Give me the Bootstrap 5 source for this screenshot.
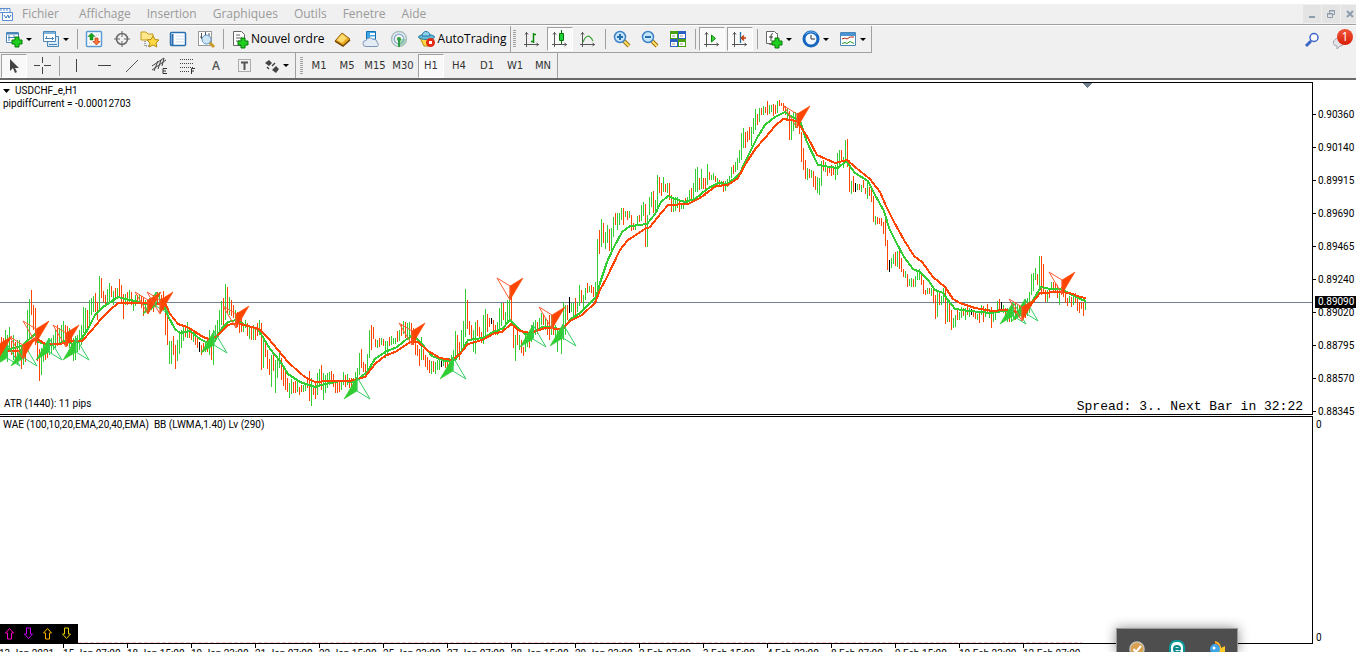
<!DOCTYPE html>
<html lang="fr">
<head>
<meta charset="utf-8">
<meta name="viewport" content="width=device-width, initial-scale=1">
<title>USDCHF_e,H1</title>
<link href="https://cdn.jsdelivr.net/npm/bootstrap@5.3.0/dist/css/bootstrap.min.css" rel="stylesheet">
<style>
body{font-family:"Open Sans","Noto Sans",sans-serif;font-size:12px;line-height:16px;color:#000;background:#fff}
button{font:inherit;color:inherit;background:none;border:0;padding:0}
svg{display:block;flex:none}
.menubar{height:21px;margin-top:4px;background:#f0f0f0;border-bottom:1px solid #a0a0a0}
.menubar nav{gap:16px}
.menubar a{color:#9a9a9a;text-decoration:none}
.winbtns{gap:1px;margin-right:-3px}
.winbtn{width:18px;height:18px;background:#e4e4e4;display:flex;align-items:center;justify-content:center}
.tools{background:#f0f0f0;border-bottom:2px solid #696969;border-top:1px solid #fff}
.bar1{height:27px}
.bar2{height:25px}
.strip{border-right:1px solid #a0a0a0}
.bar1 .strip{border-bottom:1px solid #a0a0a0}
.tb{width:28px;height:24px;display:flex;align-items:center;justify-content:center;border:1px solid transparent}
.tb.on{width:26px;margin:0 1px;background:#f9f9f9;border-color:#a0a0a0 #fff #fff #a0a0a0}
.tb.drop{width:37px;gap:3px}
.tb.wide{width:auto;gap:2px;padding:0 3px 0 4px}
.tb.drop::after{content:"";border:3px solid transparent;border-top-color:#000;border-bottom:0}
.tf{font-family:"DejaVu Sans",sans-serif;font-size:10px;color:#333}
.sep{width:1px;height:20px;background:#a0a0a0;margin:0 2px 0 3px}
.grip{width:3px;height:18px;margin:0 2px;background:repeating-linear-gradient(#a0a0a0 0 1px,#f0f0f0 1px 2px)}
.lettera{color:#555;font-weight:600}
.work{font-family:Roboto,"Noto Sans",sans-serif;font-size:10px;line-height:13px;padding-top:2px;min-height:0}
.plot{border:solid #000;border-width:1px 1px 1px 0;min-width:0}
.plot .over{position:absolute}
.plot .ttl{left:3px;top:1px}
.plot .atr{left:4px;bottom:4px}
.plot .spr{right:9px;bottom:0;font:13px/14px "Liberation Mono",monospace;white-space:pre}
.scale{width:43px;position:relative}
.ylist{padding-top:26px;height:336px;margin-bottom:-3px}
.ylist li{padding-left:5px;position:relative}
.ylist li::before{content:"";position:absolute;left:0;top:6px;width:3px;height:1px;background:#000}
.now{position:absolute;left:2px;top:214px;width:41px;height:12px;line-height:12px;background:#000;color:#fff;padding-left:3px}
.pane2{margin-top:1px;min-height:0}
.zeros{padding:2px 0 0 3px}
.sig{position:absolute;left:0;bottom:0;background:#000;padding-right:2px}
.sig button{width:19px;height:19px;display:flex;align-items:center;justify-content:center}
.dash{position:absolute;left:78px;bottom:0;width:1004px;height:1px;background:repeating-linear-gradient(90deg,#ffc4c4 0 4px,#fff 4px 6px)}
.dates{height:8px;margin-left:-1px;overflow:hidden}
.dates li{width:64px;flex:none;white-space:nowrap;line-height:14px;padding-top:3px;position:relative}
.dates li::before{content:"";position:absolute;left:0;top:0;width:1px;height:4px;background:#000}
.tray{position:absolute;right:118px;bottom:0;width:122px;height:24px;background:#4e4e4e;border:1px solid #999;border-bottom:0;box-shadow:0 0 12px rgba(0,0,0,.45);overflow:hidden;padding-top:11px}
.alerts{position:relative;width:26px;height:24px}
.alerts svg{margin:8px 0 0 2px}
.alerts .num{position:absolute;right:3px;top:1px;width:16px;height:16px;border-radius:8px;background:linear-gradient(#f0553a,#d81e05);color:#fff;text-align:center;font-size:12px}
</style>
</head>
<body class="vh-100 d-flex flex-column overflow-hidden position-relative">
<svg width="0" height="0" class="position-absolute"><defs>
<g id="plus"><path d="M3 0h4v3h3v4H7v3H3V7H0V3h3z" fill="#1fcf1f" stroke="#067a06"/></g>
<g id="axes" fill="none" stroke="#555"><path d="M3.500 2v15M1 14.500h15M2 4.500l1.500-2 1.500 2M13.500 13l2 1.500-2 1.500"/></g>
<g id="lens"><path d="M11 11l5 5" stroke="#9a7210" stroke-width="4"/><path d="M11 11l5 5" stroke="#ffe066" stroke-width="2"/><circle cx="7" cy="7" r="5.500" fill="#c5e6fa" stroke="#3f83c6" stroke-width="1.500"/></g>
<g id="up"><path d="M0 -22V-8L-13 0z" fill="#32cd32" stroke="#32cd32" stroke-width=".6"/><path d="M0 -22L13 0L0 -8z" fill="none" stroke="#32cd60"/></g>
<g id="down"><path d="M0 22V8L13 0z" fill="#ff4500" stroke="#ff4500" stroke-width=".6"/><path d="M0 22L-13 0L0 8z" fill="none" stroke="#ff5a30"/></g>
</defs></svg>

<header class="menubar d-flex align-items-center flex-shrink-0">
 <svg width="14" height="16" viewBox="0 0 14 16"><path d="M0 2.500h10v4H0M2.500 6.500h10v8h-10z" fill="#fff" stroke="#5b8dd0"/><path d="M4 9l2 3 2-3 1 3 2-3" fill="none" stroke="#3474c4"/><path d="M0 4h9" stroke="#5b8dd0" stroke-dasharray="2 1"/></svg>
 <nav class="d-flex ms-2"><a href="#">Fichier</a><a href="#" class="ms-1">Affichage</a><a href="#">Insertion</a><a href="#">Graphiques</a><a href="#">Outils</a><a href="#">Fenetre</a><a href="#">Aide</a></nav>
 <div class="winbtns d-flex ms-auto">
  <button class="winbtn" aria-label="Réduire"><svg width="10" height="10"><path d="M2 8h6" stroke="#8d9dad" stroke-width="2"/></svg></button>
  <button class="winbtn" aria-label="Restaurer"><svg width="10" height="10" fill="none" stroke="#8d9dad"><path d="M3.500 4V1.500h5v4H7M1.500 4.500h5v4h-5zM3 2h6M1 5h6"/></svg></button>
  <button class="winbtn" aria-label="Fermer"><svg width="10" height="10"><path d="M2 2l6 6M8 2l-6 6" stroke="#8d9dad" stroke-width="2"/></svg></button>
 </div>
</header>

<section class="tools flex-shrink-0">
 <div class="bar1 d-flex">
  <div class="strip d-flex align-items-center">
   <button class="tb drop" aria-label="Nouveau graphique"><svg width="18" height="18"><path d="M1.500 2.500h12v10h-12z" fill="#fff" stroke="#4a86b8"/><path d="M2 3.500h11" stroke="#4a86b8" stroke-width="2"/><path d="M4 5v6M3 7.500h7M9 5v3" stroke="#4a86b8"/><use href="#plus" x="7" y="7"/></svg></button>
   <button class="tb drop" aria-label="Profils"><svg width="18" height="18"><path d="M5.500 6.500h11v10h-11z" fill="#dceaf5" stroke="#4a86b8"/><path d="M1.500 1.500h12v10h-12z" fill="#fff" stroke="#4a86b8"/><path d="M2 3h11" stroke="#7db3dc" stroke-width="2"/><path d="M3 8.500h9M4.500 6v3M10.500 7v3M7 14.500h8" stroke="#4a86b8"/></svg></button>
   <i class="sep"></i>
   <button class="tb" aria-label="Observation du marché"><svg width="18" height="18"><rect x="1.500" y="1.500" width="15" height="15" rx="1" fill="#fff" stroke="#5a9bd5" stroke-width="1.500"/><path d="M6.500 3l3.500 3.500H8V10H5V6.500H3z" fill="#1ba51b" stroke="#087508" stroke-width=".5"/><path d="M11.500 15l-3.500-3.500h2V8h3v3.500h2z" fill="#ff7840" stroke="#c83a08" stroke-width=".8"/><path d="M11 5h4M4 13h3" stroke="#bbb" stroke-dasharray="1 1"/></svg></button>
   <button class="tb" aria-label="Fenêtre de données"><svg width="18" height="18" fill="none" stroke="#666"><circle cx="9" cy="9" r="5.500" stroke-width="1.500"/><path d="M9 1v6M9 11v6M1 9h6M11 9h6"/></svg></button>
   <button class="tb" aria-label="Navigateur"><svg width="20" height="18"><path d="M1 2h5l2 2h5v6H1z" fill="#ffe88a" stroke="#c09a20"/><path d="M5 11v5h4" fill="none" stroke="#555" stroke-dasharray="1 1"/><path d="M13 6l2 3.500 4 .5-3 3 .8 4L13 15l-3.800 2 .8-4-3-3 4-.5z" fill="#ffd942" stroke="#b98a10"/></svg></button>
   <button class="tb" aria-label="Terminal"><svg width="18" height="18"><rect x="1.500" y="2.500" width="15" height="13" rx="1" fill="#fff" stroke="#2a6fb0" stroke-width="1.500"/><path d="M3.500 4v11" stroke="#2a6fb0" stroke-width="2"/><path d="M7 6h8M7 9h8M7 12h8" stroke="#cdddee"/></svg></button>
   <button class="tb" aria-label="Testeur de stratégie"><svg width="20" height="19"><rect x="2.500" y="1.500" width="13" height="14" fill="#fff" stroke="#999"/><path d="M5.500 3v6M9.500 2v4M13 3v5M4 7h2" stroke="#555"/><path d="M13 12l5 5" stroke="#c89a28" stroke-width="3"/><circle cx="10.500" cy="9.500" r="4.500" fill="#c5e0f5" fill-opacity=".85" stroke="#5b95c8"/></svg></button>
   <i class="sep"></i>
   <button class="tb wide"><svg width="18" height="19"><path d="M2.500 1.500h8l3 3v11h-11z" fill="#fff" stroke="#666"/><path d="M5 5h4M5 8h6M5 11h4" stroke="#666"/><use href="#plus" x="7" y="8"/></svg><span>Nouvel ordre</span></button>
   <button class="tb" aria-label="MetaEditor"><svg width="18" height="18"><path d="M1 11l7-8 8 6-7 7z" fill="#e8a820" stroke="#946010"/><path d="M3 10l5-6 5 4-5 5z" fill="#ffdc70"/><path d="M1 11l8 5 7-6" fill="none" stroke="#7a4c08" stroke-width="1.500"/></svg></button>
   <button class="tb" aria-label="Hébergement"><svg width="18" height="18"><path d="M4.500 1.500h9v9h-9z" fill="#3fa5e8" stroke="#1670b0"/><path d="M8 3h5v2H8zM8 6.500h5v2H8z" fill="#fff"/><path d="M4 16.500a3 3 0 0 1 0-6 4 4 0 0 1 7-1 3 3 0 0 1 4 3 2.200 2.200 0 0 1 0 4z" fill="#e3ebf5" stroke="#7e97b8"/></svg></button>
   <button class="tb" aria-label="Signaux"><svg width="18" height="18" fill="none"><path d="M9 9v8a8 8 0 0 0 7-8z" fill="#9fdc9f"/><circle cx="9" cy="9" r="7.500" stroke="#a9bfc3" stroke-width="1.500"/><circle cx="9" cy="9" r="4.800" stroke="#7fa9cf" stroke-width="1.300"/><circle cx="9" cy="9" r="2" fill="#2f9d45"/><path d="M9 10v7" stroke="#2f9d45" stroke-width="2"/></svg></button>
   <button class="tb wide"><svg width="18" height="18"><path d="M2 8h13l-4 8H6z" fill="#ffd84a" stroke="#bb8a10"/><ellipse cx="8.500" cy="7" rx="8" ry="2.500" fill="#65b7dc" stroke="#28799f"/><path d="M4 6c0-6 8-6 8 0z" fill="#8dd2ef" stroke="#28799f"/><circle cx="12.500" cy="12.500" r="4.500" fill="#e32a12"/><path d="M11 11h3v3h-3z" fill="#fff"/></svg><span>AutoTrading</span></button>
  </div>
  <div class="strip d-flex align-items-center">
   <i class="grip"></i>
   <button class="tb" aria-label="Graphique en barres"><svg width="18" height="18"><use href="#axes"/><path d="M10.500 3v10M8 11.500h2M10.500 4.500H13" stroke="#078a07" stroke-width="1.500" fill="none"/></svg></button>
   <button class="tb on" aria-label="Chandeliers"><svg width="18" height="18"><use href="#axes"/><path d="M10.500 0v14" stroke="#077807"/><path d="M8.500 3.500h4v7h-4z" fill="#1fd03a" stroke="#077807"/></svg></button>
   <button class="tb" aria-label="Courbe"><svg width="18" height="18"><use href="#axes"/><path d="M4 12c3-7 6-8 10-1" fill="none" stroke="#3aa33a" stroke-width="1.200"/></svg></button>
   <i class="sep"></i>
   <button class="tb" aria-label="Zoom avant"><svg width="18" height="18"><use href="#lens"/><path d="M4 7h6M7 4v6" stroke="#2470ad" stroke-width="2"/></svg></button>
   <button class="tb" aria-label="Zoom arrière"><svg width="18" height="18"><use href="#lens"/><path d="M4 7h6" stroke="#2470ad" stroke-width="2"/></svg></button>
   <button class="tb" aria-label="Mosaïque"><svg width="18" height="18"><path d="M1 1h8v8H1zM9 9h8v8H9z" fill="#49a010"/><path d="M9 1h8v8H9zM1 9h8v8H1z" fill="#2a5fc4"/><path d="M2 4h6v4H2zM10 4h6v4h-6zM2 12h6v4H2zM10 12h6v4h-6z" fill="#fff"/><path d="M3 6h3M11 6h3M3 14h3M11 14h3" stroke="#999"/></svg></button>
   <i class="sep"></i>
   <button class="tb on" aria-label="Défilement automatique"><svg width="18" height="18"><use href="#axes"/><path d="M8.500 5l4 3.500-4 3.500z" fill="#3fd03f" stroke="#078a07"/></svg></button>
   <button class="tb on" aria-label="Décalage du graphique"><svg width="18" height="18"><use href="#axes"/><path d="M9.500 2v11" stroke="#2070a0" stroke-width="1.300"/><path d="M10 8h5M13 5.500L10.500 8l2.500 2.500" fill="none" stroke="#c13a0a" stroke-width="1.500"/></svg></button>
   <i class="sep"></i>
   <button class="tb drop" aria-label="Indicateurs"><svg width="18" height="19"><path d="M4.500 3.500h8v11h-8z" fill="#fff" stroke="#777"/><path d="M1.500 1.500h8l3 3v9h-11z" fill="#fff" stroke="#666"/><path d="M8 4c-2-1-2 1-2 7M4 7h4" fill="none" stroke="#333"/><use href="#plus" x="7" y="8"/></svg></button>
   <button class="tb drop" aria-label="Périodes"><svg width="18" height="18"><circle cx="9" cy="9" r="7" fill="#f2f8ff" stroke="#1766bd" stroke-width="3"/><path d="M3.500 4a8 8 0 0 1 11 0" fill="none" stroke="#71b6f2"/><path d="M9 5v4h4" fill="none" stroke="#333"/></svg></button>
   <button class="tb drop" aria-label="Modèles"><svg width="18" height="18"><path d="M1.500 2.500h15v13h-15z" fill="#fff" stroke="#4a86b8"/><path d="M2 4.500h14" stroke="#4b94d6" stroke-width="3"/><path d="M3 9l3-1 2 1 3-2h4" fill="none" stroke="#b32a10"/><path d="M3 13.500l3-1 2 1 3-2 4 2" fill="none" stroke="#229a22"/></svg></button>
  </div>
  <div class="ms-auto d-flex align-items-center">
   <button class="tb me-1" aria-label="Rechercher"><svg width="16" height="16" fill="none"><path d="M2 14l5-5" stroke="#3a66c8" stroke-width="3"/><circle cx="10" cy="5.500" r="4" fill="#fff" stroke="#3a66c8" stroke-width="1.500"/></svg></button>
   <button class="alerts" aria-label="Messages"><svg width="14" height="14"><path d="M6 1c7-2 10 7 2 8l-3 3V9C-1 8 1 2 6 1z" fill="#e3e3ea" stroke="#a5a5ad"/></svg><span class="num">1</span></button>
  </div>
 </div>
 <div class="bar2 d-flex">
  <div class="strip d-flex align-items-center">
   <button class="tb on" aria-label="Curseur"><svg width="14" height="16"><path d="M3 1v12l3-3 2 5 2-1-2-4h4z" fill="#444"/></svg></button>
   <button class="tb" aria-label="Réticule"><svg width="17" height="17"><path d="M8.500 0v6M8.500 10v7M0 8.500h6M10 8.500h7" stroke="#444"/></svg></button>
   <i class="sep"></i>
   <button class="tb" aria-label="Ligne verticale"><svg width="15" height="15"><path d="M7.500 1v13" stroke="#444"/></svg></button>
   <button class="tb" aria-label="Ligne horizontale"><svg width="15" height="15"><path d="M1 7.500h13" stroke="#444"/></svg></button>
   <button class="tb" aria-label="Ligne de tendance"><svg width="15" height="15"><path d="M1 14L13 2" stroke="#555"/></svg></button>
   <button class="tb" aria-label="Canal équidistant"><svg width="18" height="18"><path d="M1 13L15 3M1 9l12-8M3 14L7 4M7 12l3-9M11 9l2-8" stroke="#444"/><path d="M16 11.500h-4v5h4M12 14h3" fill="none" stroke="#333"/></svg></button>
   <button class="tb" aria-label="Fibonacci"><svg width="18" height="18"><path d="M1 2.500h14M1 6.500h14M1 10.500h14M1 14.500h9" stroke="#444" stroke-dasharray="1 1"/><path d="M16 11.500h-3.500V17M12 14h3" fill="none" stroke="#333"/></svg></button>
   <button class="tb lettera">A</button>
   <button class="tb" aria-label="Étiquette"><svg width="15" height="15"><path d="M1.500 1.500h12v12h-12z" fill="none" stroke="#666" stroke-dasharray="1 1"/><path d="M4 4.500h7M7.500 4v8" stroke="#555" stroke-width="2"/></svg></button>
   <button class="tb drop" aria-label="Flèches"><svg width="16" height="16"><path d="M5 2l3 3-3 3-4-3zM12 8l3 3-3 4-4-3z" fill="#444"/><path d="M3 9l2 2M8 8l3-3" stroke="#444" stroke-width="1.500"/></svg></button>
  </div>
  <div class="strip d-flex align-items-center tf">
   <i class="grip ms-1"></i>
   <button class="tb">M1</button><button class="tb">M5</button><button class="tb">M15</button><button class="tb">M30</button><button class="tb on">H1</button><button class="tb">H4</button><button class="tb">D1</button><button class="tb">W1</button><button class="tb">MN</button>
  </div>
 </div>
</section>

<main class="work flex-grow-1 d-flex flex-column">
 <div class="d-flex flex-shrink-0">
  <div class="plot flex-grow-1 position-relative">
   <svg id="chart" width="100%" height="331" shape-rendering="crispEdges"><line x1="0" x2="100%" y1="219.500" y2="219.500" stroke="#708090"/><g id="price" transform="translate(0,-83)"><path d="M1083 83h9l-4.500 5z" fill="#708090"/></g></svg>
   <div class="over ttl"><div><svg class="d-inline-block" width="7" height="8"><path d="M0 2h7L3.500 6z"/></svg>&nbsp; USDCHF_e,H1</div><div>pipdiffCurrent = -0.00012703</div></div>
   <div class="over atr">ATR (1440): 11 pips</div>
   <div class="over spr">Spread: 3.. Next Bar in 32:22</div>
  </div>
  <div class="scale"><ul class="ylist list-unstyled d-flex flex-column justify-content-between"><li>0.90360</li><li>0.90140</li><li>0.89915</li><li>0.89690</li><li>0.89465</li><li>0.89240</li><li>0.89020</li><li>0.88795</li><li>0.88570</li><li>0.88345</li></ul><div class="now">0.89090</div></div>
 </div>
 <div class="pane2 d-flex flex-grow-1">
  <div class="plot flex-grow-1 position-relative">
   <div class="over ttl">WAE (100,10,20,EMA,20,40,EMA)&nbsp; BB (LWMA,1.40) Lv (290)</div>
   <div class="dash"></div>
   <div class="sig d-flex">
    <button aria-label="Achat A"><svg width="11" height="13"><path d="M5.500 1.500l4 4.500h-2v6h-4V6h-2z" fill="none" stroke="#ff00c8"/></svg></button>
    <button aria-label="Vente A"><svg width="11" height="13"><path d="M5.500 11.500l4-4.500h-2V1h-4v6h-2z" fill="none" stroke="#c800ff"/></svg></button>
    <button aria-label="Achat B"><svg width="11" height="13"><path d="M5.500 1.500l4 4.500h-2v6h-4V6h-2z" fill="none" stroke="#ffb000"/></svg></button>
    <button aria-label="Vente B"><svg width="11" height="13"><path d="M5.500 11.500l4-4.500h-2V1h-4v6h-2z" fill="none" stroke="#e8d000"/></svg></button>
   </div>
  </div>
  <ul class="scale zeros list-unstyled mb-0 d-flex flex-column justify-content-between"><li>0</li><li>0</li></ul>
 </div>
 <ul class="dates list-unstyled d-flex mb-0 flex-shrink-0"><li>13 Jan 2021</li><li>15 Jan 07:00</li><li>18 Jan 15:00</li><li>19 Jan 23:00</li><li>21 Jan 07:00</li><li>22 Jan 15:00</li><li>25 Jan 23:00</li><li>27 Jan 07:00</li><li>28 Jan 15:00</li><li>29 Jan 23:00</li><li>2 Feb 07:00</li><li>3 Feb 15:00</li><li>4 Feb 23:00</li><li>8 Feb 07:00</li><li>9 Feb 15:00</li><li>10 Feb 23:00</li><li>12 Feb 07:00</li></ul>
</main>

<aside class="tray d-flex justify-content-around">
 <svg width="18" height="18"><circle cx="9" cy="9" r="7" fill="#d9a050" stroke="#c9c4b8" stroke-width="1.500"/><path d="M5.500 9l2.500 3 5-6" fill="none" stroke="#fff" stroke-width="2"/></svg>
 <svg width="18" height="18"><rect x="2" y="1" width="14" height="16" rx="6" fill="#fff" stroke="#0a9a9a" stroke-width="2"/><path d="M6 9h6c0-4-6-4-6 0 0 4 4 4 6 2" fill="none" stroke="#0a8a8a" stroke-width="2"/></svg>
 <svg width="18" height="18"><path d="M7 1c4 1 6 4 6 7l4-2v8l-4-2-6 5z" fill="#ffc928"/><path d="M7 2l5 4-3 4z" fill="#ea4b25"/><circle cx="7" cy="9" r="5" fill="#3ea6e8"/><circle cx="6" cy="8" r="1.500" fill="#fff"/></svg>
</aside>

<script src="https://cdn.jsdelivr.net/npm/bootstrap@5.3.0/dist/js/bootstrap.bundle.min.js"></script>
<script>
// One bar every 2px from the given x: direction, high, low
const bars = [
[1,"r337-352 r338-350 g330-350 g335-362 g327-352 r341-355 g335-360 r342-360 g340-365 g340-352 r347-369 g345-365 r345-362 g310-350 g299-340 r290-315 r305-330 r308-345 r330-361 r349-381"],
[41,"g348-375 g345-362 r345-360 r346-358 g340-355 g338-353 g335-350 g330-348 r325-346 g328-345 g325-345 g321-342 r325-345 r326-346 g328-348 r332-355 g338-361 g336-360 g335-352 g330-350"],
[81,"g325-345 g307-333 g308-332 r310-330 g300-328 g298-315 g296-312 r293-312 r302-320 g276-312 r278-298 r291-302 r295-304 g289-302 g283-302 r286-297 g291-305 r288-300 g288-298 r279-297"],
[121,"r285-302 r294-319 g294-305 r292-305 g290-302 r292-305 g300-311 g295-306 r295-303 g294-304 r296-308 r297-316 g300-312 r300-313 g298-312 g298-310 r295-312 g293-307 r292-305 g292-303"],
[161,"r295-308 r291-310 r305-335 r310-345 g341-364 g341-364 r336-355 r345-369 g340-361 g334-354 g330-348 g325-341 r327-337 g322-338 r330-338 r331-340 g332-342 r333-345 r336-348 k342-352"],
[201,"r345-355 r343-352 g342-352 r340-352 g330-355 r338-360 g330-365 g325-342 g320-338 g310-332 g301-325 r298-325 g284-320 r287-313 g297-315 r300-316 r305-318 g310-325 r312-327 r320-333"],
[241,"r315-332 g325-332 g320-328 r323-336 g325-339 r327-340 g325-340 r328-340 r323-336 g320-335 r323-370 g340-368 r343-357 r350-369 r359-375 g355-387 r352-371 g360-393 g358-378 g352-368"],
[281,"r358-380 r365-386 r372-390 r378-392 g383-398 g379-394 r382-393 r381-393 g382-392 r387-395 r385-392 g385-392 g383-391 r378-388 r371-401 g378-406 r385-395 r383-399 g373-395 g369-386"],
[321,"r365-390 g373-400 g375-393 g373-388 g372-385 r371-383 r374-387 r380-393 r380-393 r381-392 g380-390 g372-385 r375-387 g374-385 r378-388 r378-390 g378-392 g372-390 g368-380 g353-375"],
[361,"r349-368 r362-372 r364-373 g354-372 g330-358 r325-350 r327-339 r339-347 g340-348 r338-347 g338-345 r339-346 g341-358 g341-354 r337-346 g336-345 g338-344 g338-344 r331-342 g330-341"],
[401,"r325-336 g321-334 r322-338 g323-338 g322-340 r323-342 r328-345 r335-355 r345-356 r349-366 g337-360 r349-360 r355-367 r357-370 r360-373 g361-374 r361-372 g362-374 g360-370 g360-370"],
[441,"k360-367 g358-366 r360-368 r360-370 g358-370 g355-370 g350-366 g331-360 r335-357 r342-360 g330-352 g321-348 g289-337 r300-329 r321-335 r325-340 g330-352 g322-354 r320-336 r327-338"],
[481,"r332-343 g315-344 g309-335 r314-332 r318-327 k318-324 r320-332 r325-335 g322-335 g308-330 g303-326 r303-320 g312-325 g300-322 g295-320 r297-325 r325-348 g335-361 r330-345 g335-350"],
[521,"r340-353 r347-356 g335-352 g332-347 r332-348 g325-342 g322-338 g320-335 r322-334 g318-328 g313-325 r314-325 g318-330 r320-335 r315-340 g315-335 r320-335 g325-340 g330-352 r330-340"],
[561,"g330-354 g302-340 g305-335 r305-320 k297-313 g303-312 g303-320 r298-315 g303-312 g285-306 r290-303 g295-310 g288-300 r283-293 g286-292 r285-293 r287-297 g282-300 g239-290 r230-254"],
[601,"g219-247 r223-243 g232-249 g225-243 r229-251 g228-252 g217-237 r213-225 g213-230 g213-225 g208-220 r208-225 g211-217 r211-220 g211-218 r215-231 r223-230 g224-230 g216-224 r215-222"],
[641,"g205-221 g202-216 r204-247 g215-247 g197-215 g192-207 r191-213 g200-214 g175-212 r177-193 r183-196 g177-192 r184-192 g183-193 r183-200 r195-212 g197-212 g197-211 g197-208 r200-212"],
[681,"g203-209 g200-209 r198-205 g197-204 g190-201 r188-200 g183-198 g169-192 g167-192 r178-190 g169-189 r178-189 r178-196 g164-185 r172-180 g175-180 g173-180 r176-182 g178-185 r180-187"],
[721,"g181-187 r181-192 g181-191 g179-187 g176-183 g167-178 r165-174 g162-172 g158-170 g150-163 g133-160 g128-148 r132-148 r131-142 r127-140 g127-146 g118-134 g109-130 r114-125 g108-122"],
[761,"r108-115 g106-115 r107-113 r101-115 g105-114 g105-112 r104-116 r105-114 g101-113 r100-106 r103-106 r103-111 r106-115 g108-120 r111-140 g119-140 g112-131 g112-128 g113-126 r118-134"],
[801,"r132-162 r148-170 r160-179 g168-180 r169-178 g170-178 r171-187 r176-190 g177-193 g178-195 g161-186 r160-171 g162-172 r166-176 r166-173 r165-176 r168-175 g165-180 g153-175 g150-168"],
[841,"r150-162 g157-168 g140-160 r139-167 r160-192 g181-194 r176-192 k183-192 g184-190 r184-190 g185-192 r180-188 r188-194 g180-199 r187-196 r190-202 r196-222 g216-225 r217-224 r218-224"],
[881,"r218-226 r222-234 r218-246 r240-270 k260-272 g258-268 g254-264 r252-266 g251-267 r248-269 r258-272 r269-277 g271-278 r274-287 g279-286 g278-287 r279-287 g276-287 g272-280 g269-280"],
[921,"r273-285 r280-294 r290-295 g288-294 r288-294 g288-296 r289-303 r295-319 g290-317 r292-305 g296-305 g288-302 r290-324 g298-322 r300-322 r310-330 g318-328 g315-327 r309-320 g312-320"],
[961,"g307-318 r308-316 g308-320 r305-315 g308-317 k309-315 r311-317 r313-319 g314-320 r311-323 g305-315 r306-322 g308-317 r304-314 g309-318 r307-328 g310-322 g310-320 g301-312 r299-310"],
[1001,"k302-310 g305-313 r308-318 g308-322 r309-322 g305-322 g304-318 r303-320 g304-315 r305-318 g305-316 g303-316 r300-318 g298-316 g292-313 g274-295 g273-291 g268-280 r274-285 g256-290"],
[1041,"r256-295 r264-292 r290-302 g290-302 r290-298 g282-290 r282-292 r283-292 r285-298 g288-305 r287-295 r286-297 r290-303 r298-306 g296-303 r297-307 g297-305 r293-303 r298-311 r302-313"],
[1081,"r302-309 r302-316 g303-310"]];
const green = "0,352 10,349 22,346 35,334 38,342 48,345 58,344 66,341 72,344 80,341 88,329 95,315 103,307 112,301 118,297 125,299 135,301 145,304 163,304 168,316 175,329 180,333 190,331 200,339 208,343 215,341 222,328 228,322 236,320 245,325 258,329 264,339 270,349 275,355 280,361 288,374 300,382 315,387 325,384 340,381 355,382 367,372 375,359 385,352 397,347 408,338 413,335 422,344 432,356 445,361 455,360 463,349 468,340 483,338 495,331 502,329 510,320 517,327 525,334 533,333 542,327 552,327 562,330 571,319 580,313 590,303 596,297 601,280 607,262 613,249 622,232 630,226 640,225 647,224 655,214 661,202 668,196 675,199 685,202 695,199 707,189 718,183 727,184 735,178 740,173 748,156 757,138 765,125 775,117 785,112 792,117 800,120 806,140 818,165 830,167 838,168 846,161 855,173 868,181 875,195 884,211 889,228 896,242 904,257 913,269 920,272 928,280 935,290 943,293 948,300 955,309 970,311 990,313 1003,311 1018,312 1030,305 1041,287 1050,289 1062,289 1070,294 1080,299 1086,301";
const red = "0,351 20,351 28,345 36,338 45,344 60,344 72,341 82,341 92,330 101,319 110,310 118,303 140,303 155,304 165,303 170,314 178,324 187,327 194,331 203,337 212,340 220,333 228,325 237,323 248,326 259,329 268,338 278,350 288,362 300,373 305,377 315,382 330,381 350,381 365,377 375,364 385,356 397,351 410,342 418,342 428,351 440,358 452,360 460,354 468,344 482,340 495,333 502,332 511,324 520,331 530,333 545,328 562,329 570,321 582,315 595,303 600,290 607,277 620,250 628,240 645,229 650,227 657,218 668,205 688,204 700,198 716,186 728,185 738,178 746,163 756,148 765,138 775,126 783,119 790,120 797,121 808,138 817,155 835,163 847,160 855,167 870,179 880,192 886,206 894,222 904,240 914,256 922,262 933,277 945,287 953,299 960,303 975,308 992,311 1005,310 1018,312 1030,306 1040,293 1060,292 1070,293 1080,297 1086,298";
const ups = [[7,366],[24,366],[49,360],[76,360],[156,314],[214,353],[357,399],[453,379],[533,347],[563,346],[1013,324],[1025,321]];
const downs = [[-1,336],[23,337],[36,321],[66,325],[148,292],[160,292],[236,306],[412,323],[510,278],[552,307],[797,106],[1022,299],[1062,272]];
const ink = {g:"#32cd32", r:"#ff4500", k:"#000"};
let out = "";
for (const [x0, list] of bars) list.split(" ").forEach((b, i) => {
  const [hi, lo] = b.slice(1).split("-");
  out += `<rect x="${x0 + 2 * i}" y="${hi}" width="1" height="${lo - hi}" fill="${ink[b[0]]}"/>`;
});
for (const [pts, c] of [[green, ink.g], [red, ink.r]]) out += `<polyline points="${pts}" fill="none" stroke="${c}" stroke-width="2"/>`;
const mark = (id) => ([x, y]) => `<use href="#${id}" transform="translate(${x},${y})" shape-rendering="auto"/>`;
out += ups.map(mark("up")).join("") + downs.map(mark("down")).join("");
document.getElementById("price").insertAdjacentHTML("beforeend", out);
</script>
</body>
</html>
